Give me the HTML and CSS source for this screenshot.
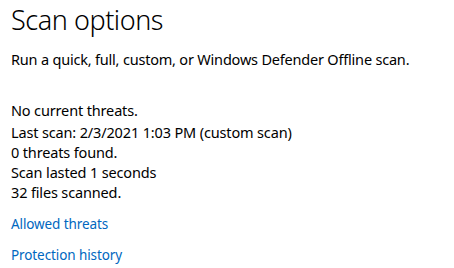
FILE: index.html
```html
<!DOCTYPE html>
<html lang="en">
<head>
  <meta charset="UTF-8" />
  <title>Scan options</title>
  <link rel="stylesheet" href="styles.css">
</head>
<body>
  <div class="page">
    <h1>Scan options</h1>
    <p class="intro">Run a quick, full, custom, or Windows Defender Offline scan.</p>

    <div class="status">
      <p class="first">No current threats.</p>
      <p>Last scan: 2/3/2021 1:03 PM (custom scan)</p>
      <p>0 threats found.</p>
      <p>Scan lasted 1 seconds</p>
      <p>32 files scanned.</p>
    </div>

    <div class="links">
      <a href="#">Allowed threats</a>
      <a href="#">Protection history</a>
    </div>
  </div>
</body>
</html>
```

FILE: styles.css
```css
body {
  font-family: 'Noto Sans', 'Open Sans', sans-serif;
  background-color: #ffffff;
  margin: 0;
  padding: 0;
  color: #000;
}

.page {
  padding: 0 11px;
}

h1 {
  font-weight: 300;
  font-size: 27px;
  letter-spacing: -0.45px;
  margin: 1px 0 0;
  line-height: 38px;
}

.intro {
  font-size: 14.5px;
  letter-spacing: -0.2px;
  margin: 9px 0 0;
  line-height: 22px;
}

.status {
  margin-top: 30px;
}

.status p {
  font-size: 14.5px;
  letter-spacing: -0.15px;
  margin: 0;
  line-height: 20px;
}

.status p.first {
  margin-bottom: 2px;
}

.links {
  margin-top: 12px;
  display: flex;
  flex-direction: column;
  gap: 11px;
}

.links a {
  font-size: 13.5px;
  letter-spacing: -0.1px;
  line-height: 20px;
  color: #0067c0;
  text-decoration: none;
}
```
